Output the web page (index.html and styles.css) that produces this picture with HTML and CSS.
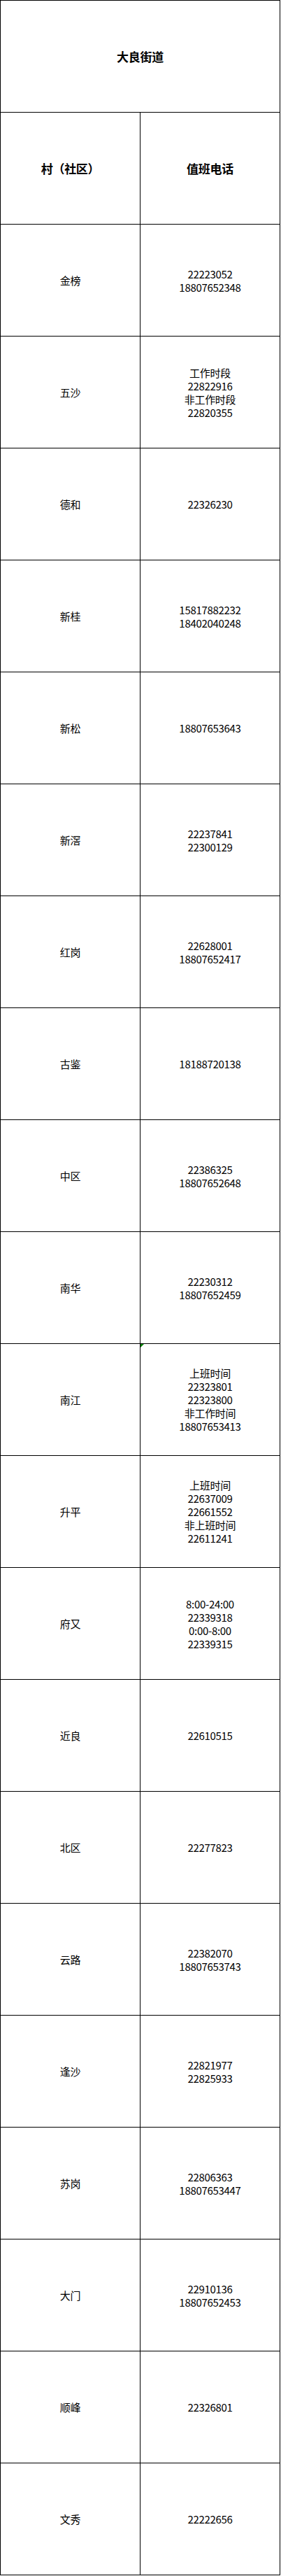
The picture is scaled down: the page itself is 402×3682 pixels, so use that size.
FILE: index.html
```html
<!DOCTYPE html>
<html lang="zh-CN">
<head>
<meta charset="utf-8">
<title>大良街道</title>
<link rel="stylesheet" href="styles.css">
</head>
<body>
<div class="sheet">
  <div class="cell title">大良街道</div>
  <div class="cell head">村（社区）</div>
  <div class="cell head">值班电话</div>

  <div class="cell">金榜</div>
  <div class="cell">22223052<br>18807652348</div>

  <div class="cell">五沙</div>
  <div class="cell">工作时段<br>22822916<br>非工作时段<br>22820355</div>

  <div class="cell">德和</div>
  <div class="cell">22326230</div>

  <div class="cell">新桂</div>
  <div class="cell">15817882232<br>18402040248</div>

  <div class="cell">新松</div>
  <div class="cell">18807653643</div>

  <div class="cell">新滘</div>
  <div class="cell">22237841<br>22300129</div>

  <div class="cell">红岗</div>
  <div class="cell">22628001<br>18807652417</div>

  <div class="cell">古鉴</div>
  <div class="cell">18188720138</div>

  <div class="cell">中区</div>
  <div class="cell">22386325<br>18807652648</div>

  <div class="cell">南华</div>
  <div class="cell">22230312<br>18807652459</div>

  <div class="cell">南江</div>
  <div class="cell noted">上班时间<br>22323801<br>22323800<br>非工作时间<br>18807653413</div>

  <div class="cell">升平</div>
  <div class="cell">上班时间<br>22637009<br>22661552<br>非上班时间<br>22611241</div>

  <div class="cell">府又</div>
  <div class="cell">8:00-24:00<br>22339318<br>0:00-8:00<br>22339315</div>

  <div class="cell">近良</div>
  <div class="cell">22610515</div>

  <div class="cell">北区</div>
  <div class="cell">22277823</div>

  <div class="cell">云路</div>
  <div class="cell">22382070<br>18807653743</div>

  <div class="cell">逢沙</div>
  <div class="cell">22821977<br>22825933</div>

  <div class="cell">苏岗</div>
  <div class="cell">22806363<br>18807653447</div>

  <div class="cell">大门</div>
  <div class="cell">22910136<br>18807652453</div>

  <div class="cell">顺峰</div>
  <div class="cell">22326801</div>

  <div class="cell">文秀</div>
  <div class="cell">22222656</div>
</div>
</body>
</html>
```

FILE: styles.css
```css
html, body {
  margin: 0;
  padding: 0;
  background: #ffffff;
}

.sheet {
  display: grid;
  grid-template-columns: 199px 199px;
  grid-auto-rows: 159px;
  gap: 1px;
  padding: 1px;
  width: 399px;
  background: #000000;
  font-family: "Noto Sans CJK SC", "Noto Sans CJK TC", sans-serif;
  font-size: 15px;
  line-height: 19px;
  color: #000000;
}

.cell {
  background: #ffffff;
  display: flex;
  align-items: center;
  justify-content: center;
  text-align: center;
  letter-spacing: -0.3px;
}

.title {
  grid-column: 1 / span 2;
  font-weight: bold;
  font-size: 17px;
}

.head {
  font-weight: bold;
  font-size: 17px;
}

.noted {
  position: relative;
}

.noted::before {
  content: "";
  position: absolute;
  top: 0;
  left: 0;
  width: 0;
  height: 0;
  border-top: 5px solid #008000;
  border-right: 5px solid transparent;
}
```
